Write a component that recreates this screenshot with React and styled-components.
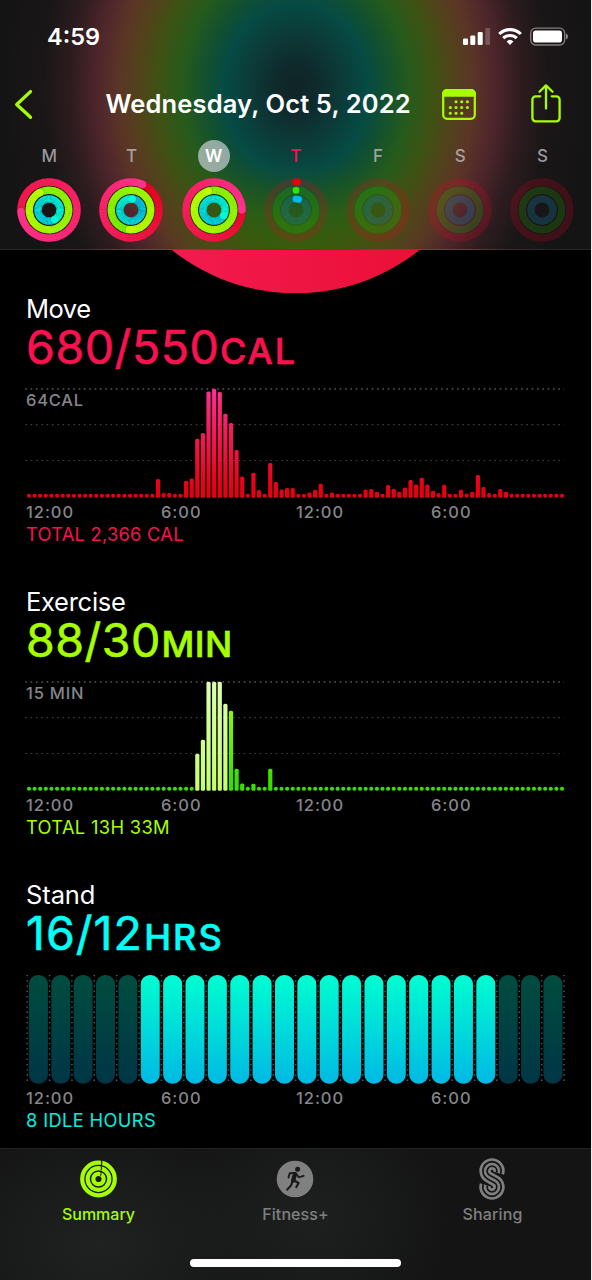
import React from "react";
import styled, { createGlobalStyle } from "styled-components";

const LIME = "#a6ff00";
const PINK = "#fa114f";
const CYAN = "#00fff6";

const GlobalStyle = createGlobalStyle`
  * { box-sizing: border-box; }
  html, body { margin: 0; padding: 0; background: #ececec; }
  body { font-family: Inter, "Liberation Sans", sans-serif; }
  svg { display: block; }
`;

const Screen = styled.div`
  width: 591px;
  height: 1280px;
  background: #000;
  display: flex;
  flex-direction: column;
  overflow: hidden;
`;

const Header = styled.header`
  flex: none;
  height: 250px;
  border-bottom: 1px solid rgba(255, 255, 255, 0.07);
  background:
    radial-gradient(ellipse 150px 90px at 296px 250px, rgba(56, 100, 0, 0.5), rgba(56, 100, 0, 0)),
    radial-gradient(
      ellipse 300px 358px at 296px 88px,
      #102426 0px,
      #0f2a2c 7%,
      #0c3a38 15%,
      #064b44 24%,
      #12502f 30%,
      #265b1c 38%,
      #3e5214 46%,
      #50441a 52%,
      #5b3526 59%,
      #4f262b 66%,
      #2e1c1f 75%,
      #1a1617 84%,
      #141414 100%
    );
`;

const StatusBar = styled.div`
  height: 72px;
  padding: 22px 23px 0 47px;
  display: flex;
  justify-content: space-between;
`;

const Clock = styled.time`
  font-size: 23.5px;
  line-height: 29px;
  font-weight: 600;
  color: #fff;
`;

const StatusIcons = styled.svg`
  width: 106px;
  height: 20px;
  margin-top: 4px;
`;

const NavBar = styled.nav`
  height: 64px;
  padding: 0 27px 0 13px;
  display: flex;
  align-items: center;
`;

const NavTitle = styled.h1`
  margin: 0 0 0 70.5px;
  width: 336.5px;
  font-size: 25.5px;
  line-height: 32px;
  font-weight: 600;
  letter-spacing: ${(p) => p.$tracking}px;
  color: #fff;
  white-space: nowrap;
`;

const NavIcon = styled.svg`
  flex: none;
  width: ${(p) => p.$w}px;
  height: 42px;
  margin-left: ${(p) => p.$gap || 0}px;
`;

const Week = styled.div`
  display: grid;
  grid-template-columns: repeat(7, 82.2px);
  margin-left: 8.2px;
`;

const Day = styled.div`
  display: flex;
  flex-direction: column;
  align-items: center;
`;

const DayLetter = styled.span`
  width: 32px;
  height: 32px;
  margin-top: 4px;
  border-radius: 50%;
  text-align: center;
  font-size: 17px;
  line-height: 32px;
  font-weight: ${(p) => (p.$selected ? 600 : 500)};
  color: ${(p) => (p.$selected ? "#fff" : p.$today ? PINK : "rgba(190,190,196,.78)")};
  background: ${(p) => (p.$selected ? "rgba(225,225,235,.62)" : "transparent")};
`;

const RingsSvg = styled.svg`
  width: 66px;
  height: 66px;
  margin-top: 4.5px;
`;

const Hero = styled.svg`
  flex: none;
  width: 591px;
  height: 43px;
`;

const Content = styled.main`
  flex: none;
  height: 855px;
  overflow: hidden;
`;

const Section = styled.section`
  height: 293px;
  padding-left: 26px;
`;

const SectionTitle = styled.h2`
  margin: 0;
  font-size: 25.5px;
  line-height: 31px;
  font-weight: 400;
  letter-spacing: ${(p) => p.$tracking}px;
  color: #fff;
`;

const Headline = styled.div`
  font-size: 46.5px;
  line-height: 46px;
  height: 46px;
  font-weight: 400;
  -webkit-text-stroke: 0.6px ${(p) => p.$color};
  stroke-linejoin: round;
  letter-spacing: ${(p) => p.$tracking}px;
  color: ${(p) => p.$color};
  white-space: nowrap;
`;

const Unit = styled.span`
  font-size: 36px;
  font-weight: 500;
  margin-left: ${(p) => p.$gap}px;
  letter-spacing: ${(p) => p.$tracking}px;
`;

const ChartBox = styled.div`
  position: relative;
  margin: 16px 0 2px -26px;
  height: 114px;
`;

const ChartSvg = styled.svg`
  width: 591px;
  height: 114px;
`;

const ScaleLabel = styled.span`
  position: absolute;
  left: 26px;
  top: 4px;
  font-size: 16.5px;
  line-height: 20px;
  font-weight: 500;
  letter-spacing: ${(p) => p.$tracking}px;
  color: #85858a;
`;

const Hours = styled.div`
  display: grid;
  grid-template-columns: repeat(4, 135px);
  font-size: 16.5px;
  line-height: 20px;
  font-weight: 500;
  letter-spacing: 0.95px;
  color: #85858a;
`;

const Total = styled.div`
  font-size: 18.3px;
  line-height: 23px;
  letter-spacing: ${(p) => p.$tracking}px;
  padding-top: 0.5px;
  color: ${(p) => p.$color};
`;

const TabBar = styled.footer`
  flex: none;
  height: 132px;
  border-top: 1px solid #222323;
  background:
    radial-gradient(ellipse 170px 130px at 100px 95px, #202222, rgba(32, 34, 34, 0)),
    radial-gradient(ellipse 140px 130px at 310px 70px, #1e2020, rgba(30, 32, 32, 0)),
    #141414;
  display: flex;
  flex-direction: column;
  align-items: center;
`;

const Tabs = styled.div`
  width: 100%;
  display: grid;
  grid-template-columns: repeat(3, 1fr);
`;

const Tab = styled.div`
  display: flex;
  flex-direction: column;
  align-items: center;
  padding-top: 8px;
  color: ${(p) => (p.$active ? LIME : "#808080")};
`;

const TabIcon = styled.svg`
  width: 44px;
  height: 44px;
`;

const TabLabel = styled.span`
  margin-top: 3px;
  font-size: 16px;
  line-height: 20px;
  font-weight: 500;
  letter-spacing: ${(p) => p.$tracking}px;
`;

const HomeIndicator = styled.div`
  width: 211px;
  height: 8px;
  margin-top: 35px;
  border-radius: 4px;
  background: #fff;
`;

const mix = (a, b, t) =>
  `rgb(${a.map((v, i) => Math.round(v + (b[i] - v) * t)).join(",")})`;

const polar = (r, deg) => {
  const a = ((deg - 90) * Math.PI) / 180;
  return [33 + r * Math.cos(a), 33 + r * Math.sin(a)];
};

const RING_KINDS = [
  { r: 28, from: [226, 0, 20], to: [255, 50, 140] },
  { r: 19.7, from: [80, 228, 0], to: [186, 255, 0] },
  { r: 11.1, from: [0, 184, 230], to: [0, 250, 212] },
];

function Ring({ kind, value }) {
  const { r, from, to } = kind;
  const total = value * 360;
  const start = Math.max(0, total - 360);
  const step = 6;
  const parts = [];
  for (let a = start; a < total - 0.01; a += step) {
    const end = Math.min(a + step + 1, total);
    const [x1, y1] = polar(r, a);
    const [x2, y2] = polar(r, end);
    parts.push(
      <path
        key={a}
        d={`M${x1} ${y1}A${r} ${r} 0 0 1 ${x2} ${y2}`}
        stroke={mix(from, to, a / total)}
        strokeWidth="7.5"
        fill="none"
      />
    );
  }
  const [hx, hy] = polar(r, total);
  const [sx, sy] = polar(r, total + 30 / r);
  return (
    <g>
      {parts}
      <circle cx={sx} cy={sy} r="3.7" fill="rgba(0,0,0,.2)" />
      <circle cx={hx} cy={hy} r="3.7" fill={mix(from, to, 1)} />
    </g>
  );
}

function Rings({ values, today }) {
  return (
    <RingsSvg viewBox="0 0 66 66">
      {values ? (
        <>
          <circle cx="33" cy="33" r="19.5" fill="none" stroke="rgba(0,0,0,.55)" strokeWidth="24" />
          {RING_KINDS.map((k, i) => (
            <Ring key={i} kind={k} value={values[i]} />
          ))}
        </>
      ) : (
        <>
          <circle cx="33" cy="33" r="28" fill="none" stroke="rgba(235,0,35,.2)" strokeWidth="7.4" />
          <circle cx="33" cy="33" r="19.7" fill="none" stroke="rgba(50,210,0,.18)" strokeWidth="7.4" />
          <circle cx="33" cy="33" r="11.1" fill="none" stroke="rgba(20,140,180,.26)" strokeWidth="7.4" />
          {today && (
            <g strokeLinecap="round" fill="none">
              <path d="M33 5h1.4" stroke="#e8000f" strokeWidth="7" />
              <path d="M33 13.4h.1" stroke="#38e000" strokeWidth="6.6" />
              <path d="M33 22l2.6.4" stroke="#00b8ea" strokeWidth="6.8" />
            </g>
          )}
        </>
      )}
    </RingsSvg>
  );
}

const DAYS = [
  { letter: "M", values: [1.742, 1.925, 1.417] },
  { letter: "T", values: [1.068, 1.515, 1.02] },
  { letter: "W", values: [1.25, 1.955, 1.335], selected: true },
  { letter: "T", today: true },
  { letter: "F" },
  { letter: "S" },
  { letter: "S" },
];

const series = (entries) => {
  const out = new Array(96).fill(4);
  Object.entries(entries).forEach(([i, h]) => {
    out[i] = h;
  });
  return out;
};

const MOVE = series({
  23: 18.7, 24: 5, 25: 5, 28: 17, 29: 19.3, 30: 59, 31: 64.7, 32: 106.3, 33: 109, 34: 105.7,
  35: 84, 36: 74.7, 37: 47.7, 38: 21.3, 40: 25, 41: 7.7, 43: 34.7, 44: 15.7, 45: 8.3, 46: 9.7,
  47: 9.7, 50: 5.3, 51: 8, 52: 14, 54: 5.3, 60: 8.3, 61: 8.7, 62: 6, 64: 12.7, 65: 9, 66: 6,
  67: 10.3, 68: 17.7, 69: 13.3, 70: 20, 71: 13.3, 72: 7, 73: 4.7, 74: 13, 77: 8, 78: 4.3,
  79: 6, 80: 22.7, 81: 10.7, 82: 4.7, 84: 8.7, 85: 6,
});

const EXERCISE = series({
  30: 37, 31: 51, 32: 109, 33: 109, 34: 109, 35: 87, 36: 80, 37: 22, 38: 7.3, 40: 7, 43: 22,
});

function BarChart({ id, data, low, high, bright }) {
  return (
    <ChartSvg viewBox="0 0 591 114">
      <defs>
        <linearGradient id={id} gradientUnits="userSpaceOnUse" x1="0" y1="112" x2="0" y2="3">
          <stop offset="0.1" stopColor={low} />
          <stop offset="1" stopColor={high} />
        </linearGradient>
        <linearGradient id={`${id}-bright`} gradientUnits="userSpaceOnUse" x1="0" y1="112" x2="0" y2="3">
          <stop offset="0" stopColor="#c4ff6c" />
          <stop offset="1" stopColor="#dcffb0" />
        </linearGradient>
      </defs>
      {[3, 38.7, 74.5].map((y, i) => (
        <path
          key={y}
          d={`M25.3 ${y}H564`}
          stroke={i === 0 ? "#5a5a5c" : "#3e3e40"}
          strokeWidth={i === 0 ? 1.6 : 1.2}
          strokeDasharray="1.6 3.73"
        />
      ))}
      {data.map((h, i) => (
        <rect
          key={i}
          x={29 + i * 5.611 - 2.1}
          y={111.8 - h}
          width="4.2"
          height={h}
          rx={h <= 5 ? 2.1 : 1.5}
          fill={`url(#${bright && i >= 30 && i <= 35 ? `${id}-bright` : id})`}
        />
      ))}
    </ChartSvg>
  );
}

function StandChart() {
  return (
    <ChartSvg viewBox="0 0 591 114">
      <defs>
        <linearGradient id="stand" x1="0" y1="0" x2="0" y2="1">
          <stop offset="0.05" stopColor="#00fad2" />
          <stop offset="1" stopColor="#00b9e4" />
        </linearGradient>
        <linearGradient id="idle" x1="0" y1="0" x2="0" y2="1">
          <stop offset="0.05" stopColor="#004b3f" />
          <stop offset="1" stopColor="#003646" />
        </linearGradient>
      </defs>
      {Array.from({ length: 25 }, (_, i) => (
        <path
          key={i}
          d={`M${27.2 + i * 22.37} 3V111`}
          stroke="#5a5a5c"
          strokeWidth="1.5"
          strokeDasharray="1.3 3.93"
        />
      ))}
      {Array.from({ length: 24 }, (_, i) => (
        <rect
          key={i}
          x={28.9 + i * 22.37}
          y="3"
          width="19"
          height="108.7"
          rx="9"
          fill={i >= 5 && i <= 20 ? "url(#stand)" : "url(#idle)"}
        />
      ))}
    </ChartSvg>
  );
}

function Metric({ title, titleTracking, value, unit, color, tracking, unitGap, unitTracking, scale, scaleTracking, total, totalColor, totalTracking, children }) {
  return (
    <Section>
      <SectionTitle $tracking={titleTracking}>{title}</SectionTitle>
      <Headline $color={color} $tracking={tracking}>
        {value}
        <Unit $gap={unitGap} $tracking={unitTracking}>{unit}</Unit>
      </Headline>
      <ChartBox>
        {children}
        {scale && <ScaleLabel $tracking={scaleTracking}>{scale}</ScaleLabel>}
      </ChartBox>
      <Hours>
        <span>12:00</span>
        <span>6:00</span>
        <span>12:00</span>
        <span>6:00</span>
      </Hours>
      <Total $color={totalColor || color} $tracking={totalTracking}>{total}</Total>
    </Section>
  );
}

const CALENDAR_DOTS = [
  [14, 15], [19.7, 15], [25.4, 15],
  [8.3, 20.8], [14, 20.8], [19.7, 20.8], [25.4, 20.8],
  [8.3, 26.4], [14, 26.4], [19.7, 26.4],
];

const S_PATH = "M6.7 -5.9A7 7 0 1 0 -3.4 -1.9L3.4 1.9A7 7 0 1 1 -6.7 5.9";

export default function App() {
  return (
    <>
      <GlobalStyle />
      <Screen>
        <Header>
          <StatusBar>
            <Clock>4:59</Clock>
            <StatusIcons viewBox="0 0 106 20">
              <g fill="#fff">
                <rect x="1" y="12.5" width="5" height="6.5" rx="1.3" />
                <rect x="8.3" y="9.5" width="5" height="9.5" rx="1.3" />
                <rect x="15.7" y="6" width="5" height="13" rx="1.3" />
                <rect x="23.3" y="2" width="4.8" height="17" rx="1.3" opacity=".22" />
              </g>
              <g fill="none" stroke="#fff" strokeWidth="3.1">
                <path d="M37.2 8a15.6 15.6 0 0 1 21.6 0" />
                <path d="M41.2 12.2a9.8 9.8 0 0 1 13.6 0" />
              </g>
              <path d="M44.6 15.4a5 5 0 0 1 6.8 0L48 19z" fill="#fff" />
              <rect x="68.7" y="2.2" width="34" height="16.8" rx="5" fill="none" stroke="#fff" strokeOpacity=".45" strokeWidth="1.3" />
              <rect x="71" y="4.6" width="29" height="12" rx="2.8" fill="#fff" />
              <path d="M104 7.6c2.6.7 2.6 5.3 0 6z" fill="#fff" opacity=".5" />
            </StatusIcons>
          </StatusBar>
          <NavBar>
            <NavIcon $w={22} viewBox="0 0 22 42" fill="none">
              <path d="M17.5 8.6L3.7 21.5L17.5 34.3" stroke={LIME} strokeWidth="3.3" strokeLinecap="round" strokeLinejoin="round" />
            </NavIcon>
            <NavTitle $tracking={0.13}>Wednesday, Oct 5, 2022</NavTitle>
            <NavIcon $w={34} viewBox="0 -6 34 42">
              <rect x="1.2" y="1.2" width="31.6" height="28.6" rx="4" fill="none" stroke={LIME} strokeWidth="2.2" />
              <path d="M0 7.8V5a5 5 0 0 1 5-5h24a5 5 0 0 1 5 5v2.8z" fill={LIME} />
              {CALENDAR_DOTS.map(([x, y]) => (
                <circle key={`${x}-${y}`} cx={x} cy={y - 2.2} r="1.5" fill={LIME} />
              ))}
            </NavIcon>
            <NavIcon $w={30} $gap={55} viewBox="0 0 30 42" fill="none" stroke={LIME} strokeWidth="2.3" strokeLinecap="round" strokeLinejoin="round">
              <path d="M9.3 13.3H4.6a3.2 3.2 0 0 0-3.2 3.2v18.6a3.2 3.2 0 0 0 3.2 3.2h20.8a3.2 3.2 0 0 0 3.2-3.2V16.5a3.2 3.2 0 0 0-3.2-3.2H20.7" />
              <path d="M15 25.5V2.6M8.5 8.8L15 2.4L21.5 8.8" />
            </NavIcon>
          </NavBar>
          <Week>
            {DAYS.map((d, i) => (
              <Day key={i}>
                <DayLetter $selected={d.selected} $today={d.today}>{d.letter}</DayLetter>
                <Rings values={d.values} today={d.today} />
              </Day>
            ))}
          </Week>
        </Header>
        <Hero viewBox="0 0 591 43">
          <defs>
            <linearGradient id="hero" x1="0.2" y1="0" x2="0.8" y2="0">
              <stop offset="0" stopColor="#f31a4e" />
              <stop offset="1" stopColor="#eb1038" />
            </linearGradient>
          </defs>
          <circle cx="295.7" cy="-155.5" r="198.8" fill="url(#hero)" />
        </Hero>
        <Content>
          <Metric title="Move" titleTracking={-0.5} value="680/550" unit="CAL" color={PINK} tracking={0.55} unitGap={0.5} unitTracking={1.8} scale="64CAL" scaleTracking={0.8} total="TOTAL 2,366 CAL" totalTracking={0.25}>
            <BarChart id="move" data={MOVE} low="#e60012" high="#ff3090" />
          </Metric>
          <Metric title="Exercise" titleTracking={-0.28} value="88/30" unit="MIN" color={LIME} tracking={0.5} unitGap={0.6} unitTracking={0.5} scale="15 MIN" scaleTracking={0.8} total="TOTAL 13H 33M" totalTracking={0.33}>
            <BarChart id="exercise" data={EXERCISE} low="#3ade00" high="#b4ff00" bright />
          </Metric>
          <Metric title="Stand" titleTracking={-0.1} value="16/12" unit="HRS" color={CYAN} tracking={1} unitGap={1.5} unitTracking={2} total="8 IDLE HOURS" totalTracking={0.36} totalColor="#00f0e0">
            <StandChart />
          </Metric>
        </Content>
        <TabBar>
          <Tabs>
            <Tab $active>
              <TabIcon viewBox="-21.500 -22 44 44" fill="none" stroke="currentColor">
                <circle r="16.3" strokeWidth="4.2" />
                <circle r="10.8" strokeWidth="4.2" />
                <circle r="5.2" strokeWidth="4.2" />
                <path d="M2.6 -18.8q1.6 2.2 0 4.8M2.4 -13.2q1.5 2.2 0 4.6M2 -7.6q1.5 2 0 4.4" stroke="#1a1b1b" strokeWidth="1.2" />
              </TabIcon>
              <TabLabel $tracking={0}>Summary</TabLabel>
            </Tab>
            <Tab>
              <TabIcon viewBox="-21 -22 44 44" fill="none">
                <circle r="18.3" fill="currentColor" />
                <g stroke="#191a1a" strokeLinecap="round" strokeLinejoin="round">
                  <circle cx="2.6" cy="-9.7" r="2.5" fill="#191a1a" stroke="none" />
                  <path d="M0 -5L-1.8 1.4" strokeWidth="4.4" />
                  <path d="M1 -5.5L3.8 -1.7L8.6 -3.2" strokeWidth="1.9" />
                  <path d="M-.5 -6.1L-5.2 -5.7L-6.5 -1.4" strokeWidth="1.9" />
                  <path d="M-.8 1.5L3.6 4L1.2 8.2" strokeWidth="2.1" />
                  <path d="M-2.6 2L-3.8 6.2L-7.8 10.6" strokeWidth="2.1" />
                </g>
              </TabIcon>
              <TabLabel $tracking={0.1}>Fitness+</TabLabel>
            </Tab>
            <Tab>
              <TabIcon viewBox="-21 -22 44 44" fill="none">
                <path d={S_PATH} stroke="currentColor" strokeWidth="11.4" />
                <path d={S_PATH} stroke="#161616" strokeWidth="6.2" />
                <path d={S_PATH} stroke="currentColor" strokeWidth="2.6" />
              </TabIcon>
              <TabLabel $tracking={0.15}>Sharing</TabLabel>
            </Tab>
          </Tabs>
          <HomeIndicator />
        </TabBar>
      </Screen>
    </>
  );
}
